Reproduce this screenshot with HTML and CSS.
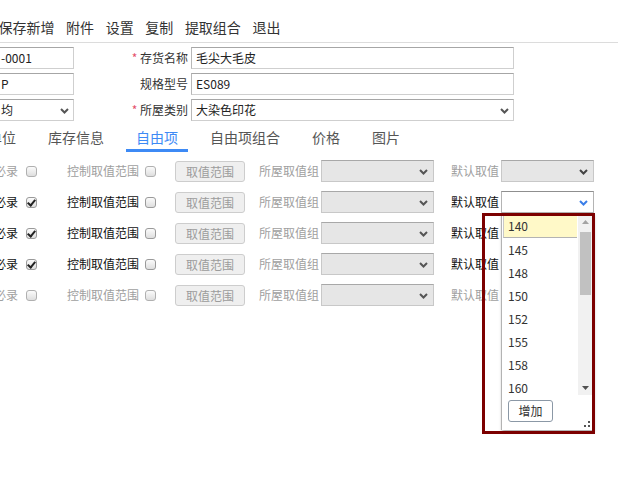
FILE: index.html
```html
<!DOCTYPE html>
<html lang="zh-CN">
<head>
<meta charset="utf-8">
<title>存货档案</title>
<link rel="stylesheet" href="styles.css">
</head>
<body>
<div class="page">
  <div class="toolbar">
    <span class="tb-item tb-first">保存新增</span>
    <span class="tb-item">附件</span>
    <span class="tb-item">设置</span>
    <span class="tb-item">复制</span>
    <span class="tb-item">提取组合</span>
    <span class="tb-item">退出</span>
  </div>

  <div class="form">
    <div class="frow">
      <div class="fld fld-left">-0001</div>
      <div class="flabel"><em>*</em> 存货名称</div>
      <div class="fld fld-main">毛尖大毛皮</div>
    </div>
    <div class="frow">
      <div class="fld fld-left">P</div>
      <div class="flabel">规格型号</div>
      <div class="fld fld-main">ES089</div>
    </div>
    <div class="frow">
      <div class="fld fld-left fld-select">均
        <svg class="chev" width="9" height="6" viewBox="0 0 9 6"><path d="M1 1 L4.5 4.5 L8 1" fill="none" stroke="#555" stroke-width="2"/></svg>
      </div>
      <div class="flabel"><em>*</em> 所屋类别</div>
      <div class="fld fld-main fld-select">大染色印花
        <svg class="chev" width="9" height="6" viewBox="0 0 9 6"><path d="M1 1 L4.5 4.5 L8 1" fill="none" stroke="#555" stroke-width="2"/></svg>
      </div>
    </div>
  </div>

  <div class="tabs">
    <span class="tab tab-first">单位</span>
    <span class="tab">库存信息</span>
    <span class="tab active">自由项</span>
    <span class="tab">自由项组合</span>
    <span class="tab">价格</span>
    <span class="tab">图片</span>
  </div>

  <div class="items">
    <div class="irow off">
      <span class="lbl l-req">必录</span><i class="cb cb-a"></i>
      <span class="lbl l-ctl">控制取值范围</span><i class="cb cb-b"></i>
      <span class="btn">取值范围</span>
      <span class="lbl l-grp gray">所屋取值组</span>
      <span class="sel sel-grp dis"><svg class="chev" width="9" height="6" viewBox="0 0 9 6"><path d="M1 1 L4.5 4.5 L8 1" fill="none" stroke="#555" stroke-width="2"/></svg></span>
      <span class="lbl l-def">默认取值</span>
      <span class="sel sel-def dis"><svg class="chev" width="9" height="6" viewBox="0 0 9 6"><path d="M1 1 L4.5 4.5 L8 1" fill="none" stroke="#444" stroke-width="2"/></svg></span>
    </div>
    <div class="irow">
      <span class="lbl l-req">必录</span><i class="cb cb-a on"></i>
      <span class="lbl l-ctl">控制取值范围</span><i class="cb cb-b"></i>
      <span class="btn">取值范围</span>
      <span class="lbl l-grp gray">所屋取值组</span>
      <span class="sel sel-grp dis"><svg class="chev" width="9" height="6" viewBox="0 0 9 6"><path d="M1 1 L4.5 4.5 L8 1" fill="none" stroke="#555" stroke-width="2"/></svg></span>
      <span class="lbl l-def">默认取值</span>
      <span class="sel sel-def act"><svg class="chev" width="9" height="6" viewBox="0 0 9 6"><path d="M1 1 L4.5 4.5 L8 1" fill="none" stroke="#3b7ee8" stroke-width="2"/></svg></span>
    </div>
    <div class="irow">
      <span class="lbl l-req">必录</span><i class="cb cb-a on"></i>
      <span class="lbl l-ctl">控制取值范围</span><i class="cb cb-b"></i>
      <span class="btn">取值范围</span>
      <span class="lbl l-grp gray">所屋取值组</span>
      <span class="sel sel-grp dis"><svg class="chev" width="9" height="6" viewBox="0 0 9 6"><path d="M1 1 L4.5 4.5 L8 1" fill="none" stroke="#555" stroke-width="2"/></svg></span>
      <span class="lbl l-def">默认取值</span>
      <span class="sel sel-def act"></span>
    </div>
    <div class="irow">
      <span class="lbl l-req">必录</span><i class="cb cb-a on"></i>
      <span class="lbl l-ctl">控制取值范围</span><i class="cb cb-b"></i>
      <span class="btn">取值范围</span>
      <span class="lbl l-grp gray">所屋取值组</span>
      <span class="sel sel-grp dis"><svg class="chev" width="9" height="6" viewBox="0 0 9 6"><path d="M1 1 L4.5 4.5 L8 1" fill="none" stroke="#555" stroke-width="2"/></svg></span>
      <span class="lbl l-def">默认取值</span>
      <span class="sel sel-def act"></span>
    </div>
    <div class="irow off">
      <span class="lbl l-req">必录</span><i class="cb cb-a"></i>
      <span class="lbl l-ctl">控制取值范围</span><i class="cb cb-b"></i>
      <span class="btn">取值范围</span>
      <span class="lbl l-grp gray">所屋取值组</span>
      <span class="sel sel-grp dis"><svg class="chev" width="9" height="6" viewBox="0 0 9 6"><path d="M1 1 L4.5 4.5 L8 1" fill="none" stroke="#555" stroke-width="2"/></svg></span>
      <span class="lbl l-def">默认取值</span>
      <span class="sel sel-def dis"></span>
    </div>
  </div>

  <div class="dropdown">
    <div class="dd-body">
      <div class="dd-list">
        <div class="dd-item hl">140</div>
        <div class="dd-item">145</div>
        <div class="dd-item">148</div>
        <div class="dd-item">150</div>
        <div class="dd-item">152</div>
        <div class="dd-item">155</div>
        <div class="dd-item">158</div>
        <div class="dd-item">160</div>
      </div>
      <div class="dd-scroll">
        <svg class="arr" width="15" height="14" viewBox="0 0 15 14"><path d="M4 9 L7.5 5 L11 9 Z" fill="#a3a3a3"/></svg>
        <div class="thumb"></div>
        <div class="track-rest"></div>
        <svg class="arr" width="15" height="14" viewBox="0 0 15 14"><path d="M4 5 L7.5 9 L11 5 Z" fill="#505050"/></svg>
      </div>
    </div>
    <div class="dd-foot">
      <span class="add-btn">增加</span>
      <svg class="grip" width="8" height="8" viewBox="0 0 8 8"><rect x="5" y="1" width="2" height="2" fill="#555"/><rect x="1" y="5" width="2" height="2" fill="#555"/><rect x="5" y="5" width="2" height="2" fill="#555"/></svg>
    </div>
  </div>

  <div class="annot"></div>
</div>
</body>
</html>
```

FILE: styles.css
```css
html, body {
  margin: 0;
  padding: 0;
  background: #fff;
}

.page {
  position: relative;
  width: 618px;
  height: 495px;
  overflow: hidden;
  font-family: "Noto Sans CJK SC", "Liberation Sans", sans-serif;
  color: #333;
}

/* toolbar */
.toolbar {
  display: flex;
  gap: 11.6px;
  height: 25px;
  padding-top: 17px;
  border-bottom: 1px solid #dcdcdc;
  font-size: 14px;
  line-height: 20px;
  box-sizing: content-box;
  white-space: nowrap;
}
.tb-first { margin-left: -1.5px; }

/* form */
.form {
  padding-top: 4px;
  display: flex;
  flex-direction: column;
  gap: 4px;
}
.frow {
  display: flex;
  height: 22px;
}
.fld {
  box-sizing: border-box;
  height: 22px;
  border: 1px solid #cfcfcf;
  border-top-color: #a6a6a6;
  border-left-color: #b8b8b8;
  font-size: 12px;
  line-height: 20px;
  color: #222;
  position: relative;
  white-space: nowrap;
}
.fld-left {
  margin-left: -8px;
  width: 82px;
  padding-left: 8px;
}
.fld-main {
  width: 323px;
  padding-left: 4px;
}
.fld-select .chev {
  position: absolute;
  right: 4px;
  top: 8px;
}
.flabel {
  box-sizing: border-box;
  width: 117px;
  padding-right: 3px;
  text-align: right;
  font-size: 12px;
  line-height: 22px;
  color: #333;
  white-space: nowrap;
}
.flabel em {
  font-style: normal;
  color: #e4506a;
}

/* tabs */
.tabs {
  display: flex;
  gap: 12px;
  margin-top: 1px;
  font-size: 14px;
  white-space: nowrap;
}
.tab {
  padding: 5px 10px 2px;
  line-height: 20px;
  border-bottom: 3px solid transparent;
  color: #555;
}
.tab-first { margin-left: -22px; }
.tab.active {
  color: #3d8af5;
  border-bottom-color: #3d8af5;
}

/* free item rows */
.items {
  margin-top: 8px;
  display: flex;
  flex-direction: column;
  gap: 9px;
}
.irow {
  display: flex;
  align-items: center;
  height: 22px;
  font-size: 12px;
  white-space: nowrap;
}
.lbl {
  line-height: 22px;
  color: #111;
}
.gray,
.off .lbl { color: #a0a0a0; }
.l-req { margin-left: -6px; width: 24px; }
.l-ctl { margin-left: 30px; width: 72px; }
.l-grp { margin-left: 14px; width: 60px; }
.l-def { margin-left: 17px; width: 48px; }

.cb {
  box-sizing: border-box;
  width: 11px;
  height: 11px;
  border: 1px solid #9a9a9a;
  border-radius: 3px;
  background: linear-gradient(#fbfbfb, #dedede);
  position: relative;
}
.off .cb { border-color: #b0b0b0; }
.cb-a { margin-left: 8px; }
.cb-b { margin-left: 6px; }
.cb.on::after {
  content: "";
  position: absolute;
  left: 2px;
  top: 0px;
  width: 3px;
  height: 6px;
  border: solid #222;
  border-width: 0 2px 2px 0;
  transform: rotate(40deg);
}

.btn {
  box-sizing: border-box;
  margin-left: 19px;
  width: 70px;
  height: 21px;
  line-height: 19px;
  text-align: center;
  border: 1px solid #cdcdcd;
  border-radius: 3px;
  background: #efefef;
  color: #9c9c9c;
}

.sel {
  box-sizing: border-box;
  margin-left: 2px;
  height: 22px;
  border: 1px solid #c8c8c8;
  border-top-color: #a8a8a8;
  position: relative;
}
.sel .chev {
  position: absolute;
  right: 5px;
  top: 8px;
}
.sel-grp { width: 113px; }
.sel-def { width: 93px; }
.sel.dis { background: #e6e6e6; }
.sel.act { background: #fff; border-color: #b4b4b4; border-top-color: #8f8f8f; }

/* dropdown menu */
.dropdown {
  position: absolute;
  left: 501px;
  top: 213px;
  width: 92px;
  height: 217px;
  box-sizing: border-box;
  background: #fff;
  border-left: 1px solid #b3b3b3;
  box-shadow: 1px 2px 3px rgba(0, 0, 0, 0.35);
  display: flex;
  flex-direction: column;
}
.dd-body {
  display: flex;
  margin-top: 2px;
  height: 180px;
}
.dd-list {
  width: 74px;
  margin-left: 1px;
  overflow: hidden;
}
.dd-item {
  box-sizing: border-box;
  height: 23px;
  line-height: 23px;
  padding-left: 5px;
  font-size: 12px;
  color: #333;
}
.dd-item.hl {
  background: #fff9c8;
  border-left: 1px solid #c9c9c9;
  border-bottom: 1px solid #b3b3b3;
  padding-left: 4px;
  line-height: 22px;
}
.dd-scroll {
  width: 15px;
  margin-left: 1px;
  background: #f1f1f1;
  display: flex;
  flex-direction: column;
}
.arr { display: block; flex: none; }
.thumb {
  margin: 3px 2px 0;
  height: 63px;
  background: #c1c1c1;
}
.track-rest { flex: 1; }

.dd-foot {
  position: relative;
  flex: 1;
}
.add-btn {
  position: absolute;
  left: 6px;
  top: 5px;
  box-sizing: border-box;
  width: 45px;
  height: 22px;
  line-height: 20px;
  text-align: center;
  font-size: 12px;
  color: #333;
  border: 1px solid #8b98a6;
  border-radius: 3px;
  background: #fff;
}
.grip {
  position: absolute;
  right: 2px;
  bottom: 2px;
}

/* annotation highlight */
.annot {
  position: absolute;
  left: 482px;
  top: 213px;
  width: 113px;
  height: 221px;
  box-sizing: border-box;
  border: 3px solid #7c0000;
  pointer-events: none;
}
```
